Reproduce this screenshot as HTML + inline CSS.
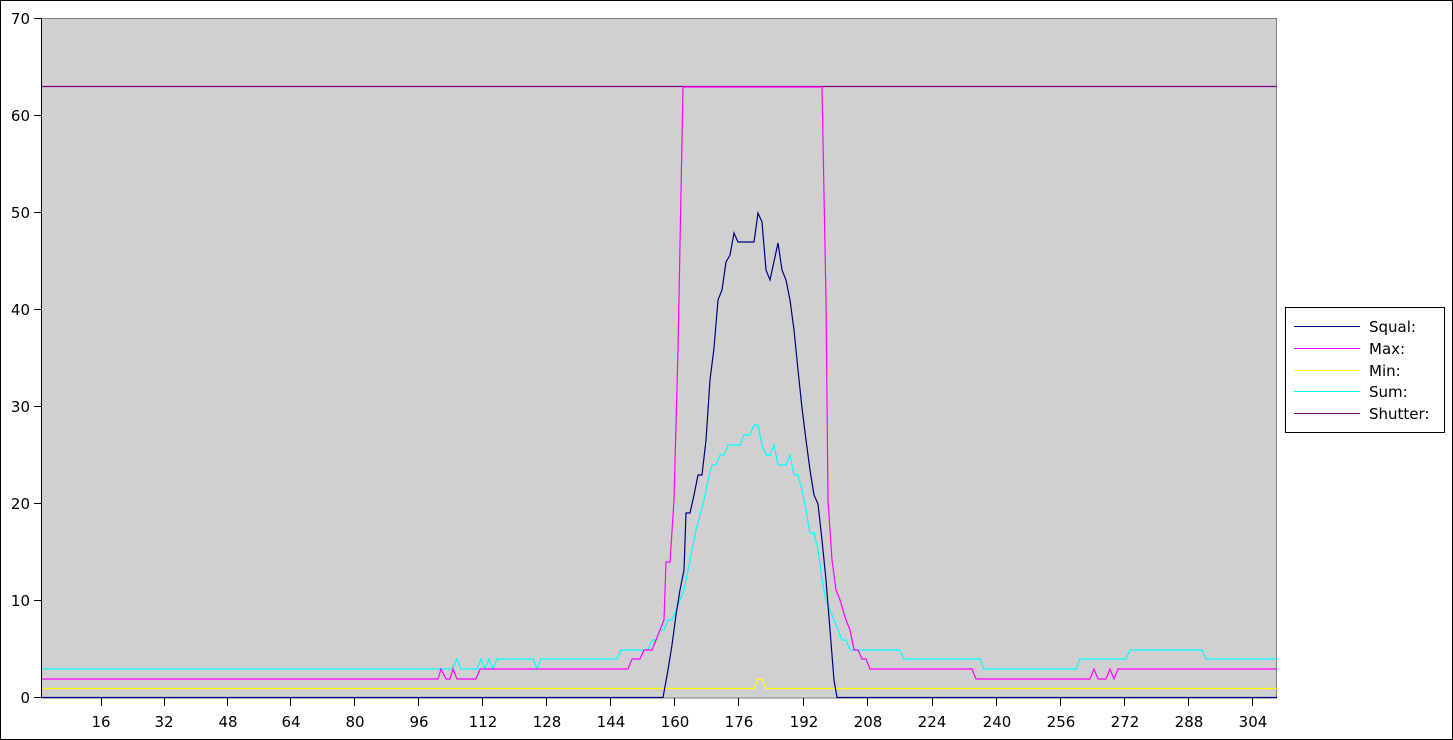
<!DOCTYPE html>
<html><head><style>
html,body{margin:0;padding:0;background:#fff;}
svg{display:block;}
text{font-family:"DejaVu Sans","Liberation Sans",sans-serif;font-size:15px;fill:#000;}
</style></head><body>
<svg width="1453" height="740" viewBox="0 0 1453 740" xmlns="http://www.w3.org/2000/svg">
<rect x="0.5" y="0.5" width="1452" height="739" fill="#fff" stroke="#000"/>
<rect x="41.5" y="18.5" width="1235" height="679.5" fill="#d0d0d0" stroke="#808080"/>
<line x1="41.5" y1="18" x2="41.5" y2="698" stroke="#000"/>
<g stroke="#000">
<line x1="34" y1="18.5" x2="41" y2="18.5"/><line x1="34" y1="115.5" x2="41" y2="115.5"/>
<line x1="34" y1="212.5" x2="41" y2="212.5"/><line x1="34" y1="309.5" x2="41" y2="309.5"/>
<line x1="34" y1="406.5" x2="41" y2="406.5"/><line x1="34" y1="503.5" x2="41" y2="503.5"/>
<line x1="34" y1="600.5" x2="41" y2="600.5"/><line x1="34" y1="697.5" x2="41" y2="697.5"/>
</g>
<g text-anchor="end">
<text x="30" y="24">70</text><text x="30" y="121">60</text><text x="30" y="218">50</text>
<text x="30" y="315">40</text><text x="30" y="412">30</text><text x="30" y="509">20</text>
<text x="30" y="606">10</text><text x="30" y="703">0</text>
</g>
<g stroke="#000">
<line x1="101.5" y1="698" x2="101.5" y2="706"/><line x1="164.5" y1="698" x2="164.5" y2="706"/>
<line x1="227.5" y1="698" x2="227.5" y2="706"/><line x1="290.5" y1="698" x2="290.5" y2="706"/>
<line x1="354.5" y1="698" x2="354.5" y2="706"/><line x1="418.5" y1="698" x2="418.5" y2="706"/>
<line x1="482.5" y1="698" x2="482.5" y2="706"/><line x1="546.5" y1="698" x2="546.5" y2="706"/>
<line x1="610.5" y1="698" x2="610.5" y2="706"/><line x1="674.5" y1="698" x2="674.5" y2="706"/>
<line x1="738.5" y1="698" x2="738.5" y2="706"/><line x1="803.5" y1="698" x2="803.5" y2="706"/>
<line x1="867.5" y1="698" x2="867.5" y2="706"/><line x1="932.5" y1="698" x2="932.5" y2="706"/>
<line x1="996.5" y1="698" x2="996.5" y2="706"/><line x1="1060.5" y1="698" x2="1060.5" y2="706"/>
<line x1="1124.5" y1="698" x2="1124.5" y2="706"/><line x1="1188.5" y1="698" x2="1188.5" y2="706"/>
<line x1="1252.5" y1="698" x2="1252.5" y2="706"/>
</g>
<g text-anchor="middle">
<text x="101" y="727">16</text><text x="164" y="727">32</text><text x="228" y="727">48</text>
<text x="291" y="727">64</text><text x="355" y="727">80</text><text x="419" y="727">96</text>
<text x="483" y="727">112</text><text x="547" y="727">128</text><text x="611" y="727">144</text>
<text x="675" y="727">160</text><text x="739" y="727">176</text><text x="804" y="727">192</text>
<text x="868" y="727">208</text><text x="932" y="727">224</text><text x="997" y="727">240</text>
<text x="1061" y="727">256</text><text x="1125" y="727">272</text><text x="1189" y="727">288</text>
<text x="1253" y="727">304</text>
</g>
<g fill="none" stroke-width="1.2">
<polyline stroke="#800080" points="42,86.5 1277,86.5"/>
<polyline stroke="#ffff00" points="42,688.5 754,688.5 758,679 762,679 766,688.5 1277,688.5"/>
<polyline stroke="#00ffff" points="42,669 452,669 457,659 461,669 477,669 481,659 485,669 489,659 493,669 497,659 533,659 537,669 541,659 617,659 621,650 648,650 652,640 656,640 660,630 664,630 668,620 672,620 676,610 680,600 684,590 688,570 692,550 696,530 700,515 704,500 708,480 712,465 716,465 720,455 724,455 728,445 740,445 744,435 750,435 754,425 758,425 762,445 766,455 770,455 774,445 778,465 786,465 790,455 794,475 798,475 802,490 806,510 810,533 814,533 818,550 822,580 826,600 830,610 834,620 838,630 842,640 846,640 850,650 900,650 904,659 980,659 984,669 1076,669 1080,659 1126,659 1130,650 1202,650 1206,659 1277,659"/>
<polyline stroke="#ff00ff" points="42,679 438,679 441,669 446,679 450,679 453,669 457,679 476,679 480,669 628,669 632,659 640,659 644,650 652,650 656,640 660,630 664,620 666,562 670,562 674,500 678,350 683,87 822,87 826,300 828,500 832,560 836,590 840,600 846,620 850,630 854,650 858,650 862,659 866,659 870,669 972,669 976,679 1090,679 1094,669 1098,679 1106,679 1110,669 1114,679 1118,669 1277,669"/>
<polyline stroke="#000080" points="42,697.5 663,697.5 668,670 672,645 676,615 680,590 684,570 686,513 690,513 694,495 698,475 702,475 706,440 710,380 714,348 718,300 722,290 726,262 730,255 734,233 738,242 754,242 758,213 762,222 766,270 770,280 778,243 782,270 786,280 790,300 794,330 798,370 802,408 806,440 810,470 814,495 818,504 822,540 826,580 830,630 834,680 837,697.5 1277,697.5"/>
</g>
<rect x="1285.5" y="307.5" width="159" height="125" fill="#fff" stroke="#000"/>
<line x1="1294" y1="326.5" x2="1360" y2="326.5" stroke="#000080"/>
<line x1="1294" y1="348.5" x2="1360" y2="348.5" stroke="#ff00ff"/>
<line x1="1294" y1="370.5" x2="1360" y2="370.5" stroke="#ffff00"/>
<line x1="1294" y1="391.5" x2="1360" y2="391.5" stroke="#00ffff"/>
<line x1="1294" y1="413.5" x2="1360" y2="413.5" stroke="#800080"/>
<text x="1369" y="332">Squal:</text>
<text x="1369" y="354">Max:</text>
<text x="1369" y="376">Min:</text>
<text x="1369" y="397">Sum:</text>
<text x="1369" y="419">Shutter:</text>
</svg>
</body></html>
